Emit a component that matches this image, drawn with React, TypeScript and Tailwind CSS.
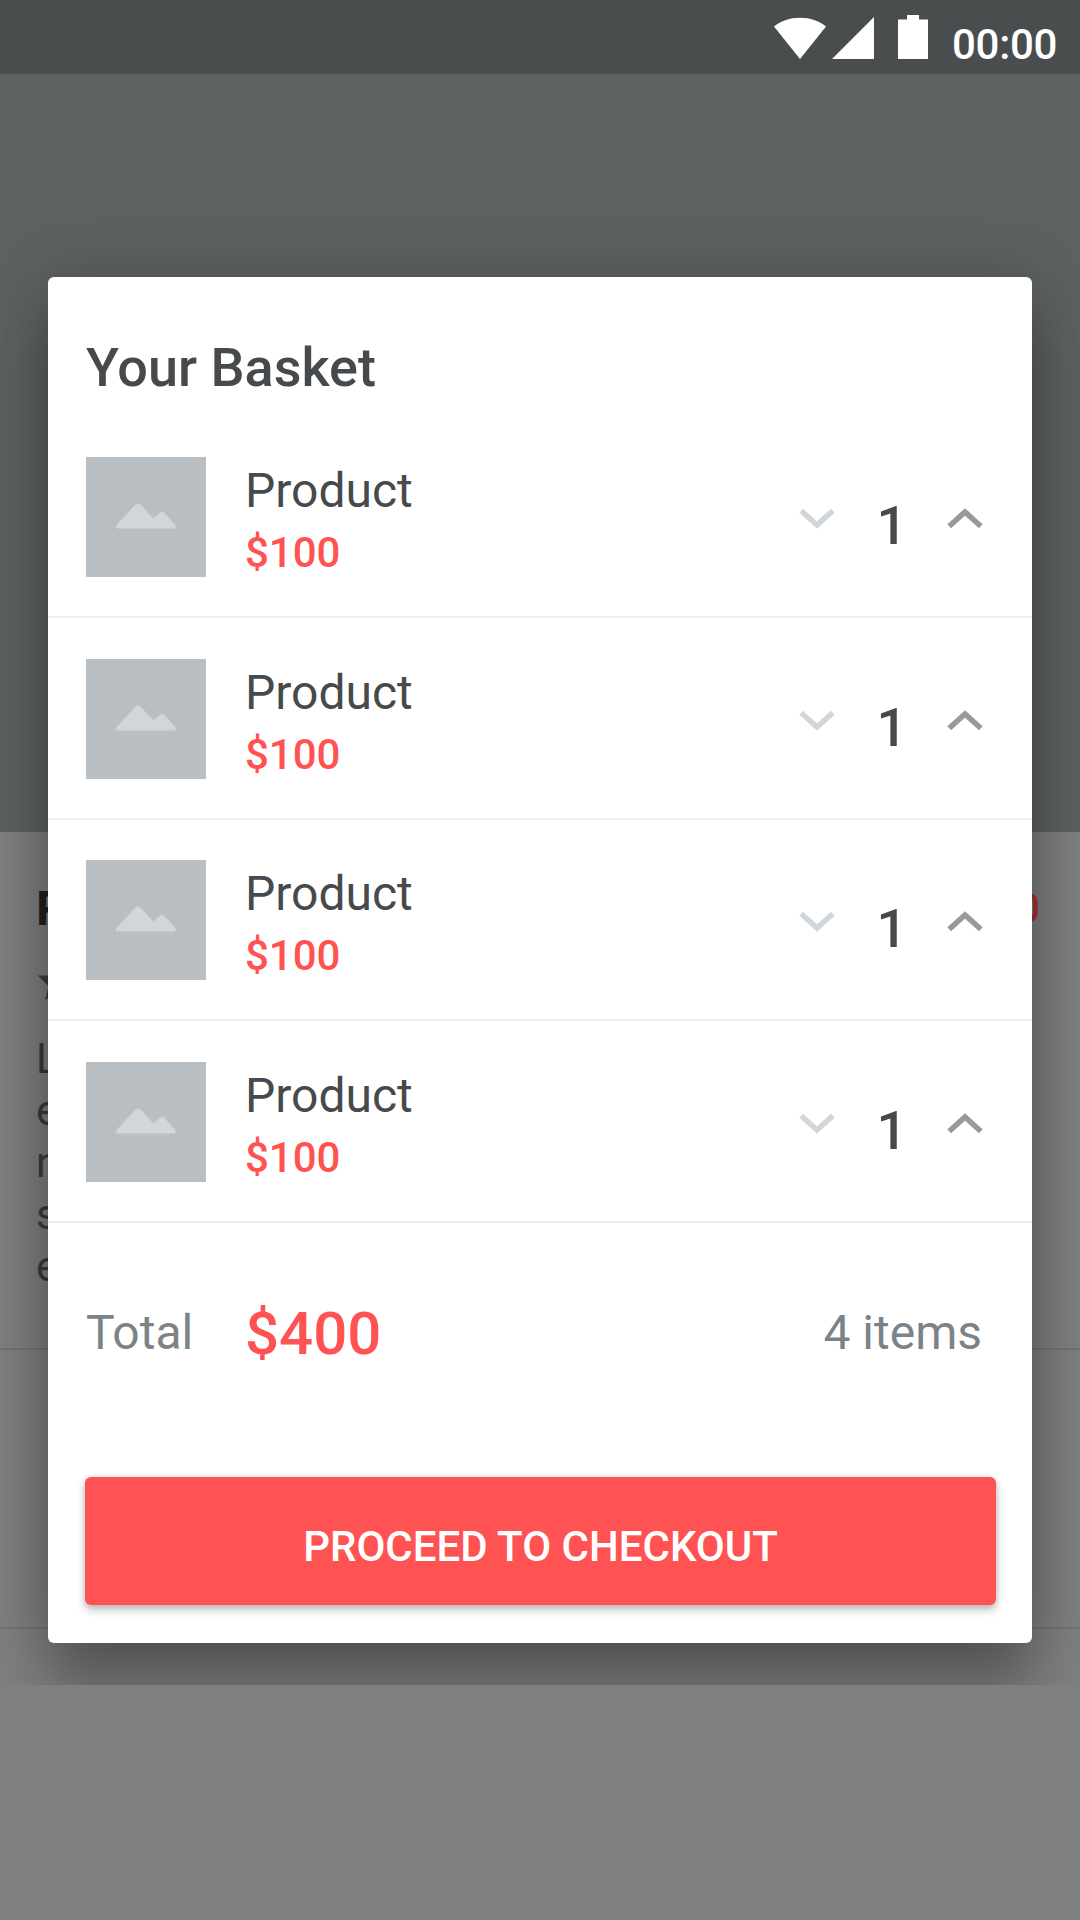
const products = [
  { name: "Product", price: "$100", quantity: 1 },
  { name: "Product", price: "$100", quantity: 1 },
  { name: "Product", price: "$100", quantity: 1 },
  { name: "Product", price: "$100", quantity: 1 },
];

const description = ["Lorem ipsum", "elit sed do", "nisi ut", "sint", "esse"];

function StatusBar() {
  return (
    <header className="flex h-[74px] bg-[#4a4d4e] pl-[774px] text-white">
      <svg width="52" height="42" viewBox="0 0 52 42" className="mt-[17px] shrink-0" fill="currentColor">
        <path d="M0 9.5C7 4 16 .8 26 .8s19 3.200 26 8.700L26 42z" />
      </svg>
      <svg width="42" height="42" viewBox="0 0 42 42" className="mt-[17px] ml-[6px] shrink-0" fill="currentColor">
        <path d="M42 0v42H0z" />
      </svg>
      <svg width="30" height="44" viewBox="0 0 30 44" className="mt-[15px] ml-6 shrink-0" fill="currentColor">
        <path d="M9 0h12v4.500h9V44H0V4.500h9z" />
      </svg>
      <span className="mt-[15px] ml-6 text-[42px] leading-[60px] font-medium tracking-[-0.3px]">00:00</span>
    </header>
  );
}

function ProductPage() {
  return (
    <div>
      <StatusBar />
      <div className="h-[758px] bg-[#5d6162]" />
      <div className="h-[516px] px-9 pt-[49px]">
        <div className="flex items-start justify-between">
          <span className="text-5xl leading-[56px] font-bold text-[#202123]">Product</span>
          <span className="mr-[4px] text-[40px] leading-[56px] font-medium text-[#a9333a]">$100</span>
        </div>
        <svg width="40" height="40" viewBox="0 0 40 40" className="mt-[25px] ml-[2px]" fill="#3d3e40">
          <path d="M20 0l4.700 13.500H40L29.500 24.500l3.500 13.500L20 30 7 38l3.500-13.500L0 13.500h15.300z" />
        </svg>
        <div className="mt-[31px] text-[42px] leading-[52px] text-[#3a3b3d]">
          {description.map((line) => (
            <p key={line}>{line}</p>
          ))}
        </div>
      </div>
      <div className="h-[281px] border-t-2 border-b-2 border-[#727375]" />
    </div>
  );
}

function Placeholder() {
  return (
    <div className="flex size-[120px] shrink-0 items-center justify-center bg-[#b9bec2]">
      <svg width="60" height="26" viewBox="0 0 60 26" className="mb-[2px]" fill="#d1d6da">
        <path d="M1 21.500 19 2q3-3 6 0l12.500 13.500L43.500 10q2.500-2.500 5 0L59 21.500q2.500 4-1.500 4h-55q-4 0-1.500-4z" />
      </svg>
    </div>
  );
}

function Chevron({ up = false }: { up?: boolean }) {
  return (
    <svg
      width="36"
      height="21"
      viewBox="0 0 36 21"
      fill="none"
      stroke={up ? "#97999a" : "#d1d6da"}
      strokeWidth="5.500"
    >
      <path d={up ? "M2.200 18.300 18 4l15.800 14.300" : "M2.200 2.700 18 17 33.800 2.700"} />
    </svg>
  );
}

function BasketRow({ name, price, quantity }: (typeof products)[number]) {
  return (
    <li className="flex h-[201.5px] border-b-2 border-[#eceff1] pt-[40.5px] pr-[49.5px] pl-[38px]">
      <Placeholder />
      <div className="mt-[6px] ml-[39px] flex-1">
        <p className="text-5xl leading-[56px] text-[#464a4d]">{name}</p>
        <p className="text-[42px] leading-[67px] font-medium text-[#ff5252]">{price}</p>
      </div>
      <div className="flex w-[184px] items-start">
        <button aria-label="Decrease" className="mt-[51px] w-9">
          <Chevron />
        </button>
        <span className="mt-[39px] ml-[42px] w-[70px] text-[54px] leading-[60px] font-medium text-[#464a4d]">
          {quantity}
        </span>
        <button aria-label="Increase" className="mt-[51px] w-9">
          <Chevron up />
        </button>
      </div>
    </li>
  );
}

function BasketDialog() {
  return (
    <section className="h-[1366px] w-[984px] rounded-[6px] bg-white shadow-[0_48px_60px_rgba(0,0,0,0.28),0_0_60px_rgba(0,0,0,0.18)]">
      <h1 className="h-[139.5px] pt-[61px] pl-[38px] text-[54px] leading-[60px] font-medium text-[#464a4d]">
        Your Basket
      </h1>
      <ul>
        {products.map((product, index) => (
          <BasketRow key={index} {...product} />
        ))}
      </ul>
      <div className="mt-[70px] flex h-[80px] items-start pr-[50px] pl-[38px] text-5xl leading-[80px] text-[#7b8388]">
        <span className="w-[159px]">Total</span>
        <span className="mt-px text-[60px] leading-[80px] font-medium text-[#ff5252]">$400</span>
        <span className="ml-auto">4 items</span>
      </div>
      <button className="mt-[104.500px] ml-[37px] flex h-[128px] w-[911px] items-center justify-center rounded-[6px] bg-[#ff5252] pt-[12px] text-[42px] leading-[60px] font-medium text-white shadow-[0_5px_8px_rgba(0,0,0,0.24),0_0_6px_rgba(0,0,0,0.12)]">
        PROCEED TO CHECKOUT
      </button>
    </section>
  );
}

export default function App() {
  return (
    <main className="h-[1920px] w-[1080px] overflow-hidden bg-[#7e7f81] font-[Roboto,sans-serif]">
      <div className="relative h-[1685px] overflow-hidden">
        <ProductPage />
        <div className="absolute inset-0 flex justify-center pt-[277px]">
          <BasketDialog />
        </div>
      </div>
    </main>
  );
}
